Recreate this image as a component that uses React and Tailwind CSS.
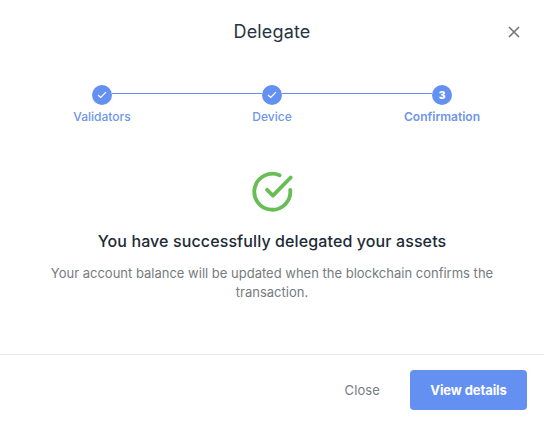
import React from "react";

const steps = [
  { label: "Validators", done: true, text: "font-medium" },
  { label: "Device", done: true, text: "font-medium" },
  { label: "Confirmation", done: false, text: "font-semibold" },
];

function Tick() {
  return (
    <svg className="mb-px" width="10" height="10" viewBox="0 0 10 10" fill="none" stroke="#fff" strokeWidth="1.3">
      <path d="M1 4.9 3.7 7.4 9 2.1" />
    </svg>
  );
}

function Stepper() {
  return (
    <div className="flex h-[41px] justify-center">
      {steps.map((step, i) => (
        <div key={step.label} className="flex w-[170px] flex-col items-center">
          <div className="flex h-5 w-full">
            <div className={i === 0 ? "mt-2 h-px flex-1" : "mt-2 h-px flex-1 bg-[#6490f1]"} />
            <div className="flex size-5 items-center justify-center rounded-full bg-[#6490f1] text-[10px] font-black text-white">
              {step.done ? <Tick /> : i + 1}
            </div>
            <div className={i === 2 ? "mt-2 h-px flex-1" : "mt-2 h-px flex-1 bg-[#6490f1]"} />
          </div>
          <span className={`mt-[3px] text-xs leading-[18px] text-[#6f95e8] ${step.text}`}>{step.label}</span>
        </div>
      ))}
    </div>
  );
}

export default function App() {
  return (
    <div className="flex h-[425px] w-[544px] flex-col overflow-hidden bg-white font-['Inter',sans-serif]">
      <header className="grid h-16 grid-cols-[60px_1fr_60px] items-center">
        <h1 className="col-start-2 text-center text-lg leading-6 tracking-[0.15px] text-[#27343f]">Delegate</h1>
        <button className="flex justify-center" aria-label="Close dialog">
          <svg width="12" height="12" viewBox="0 0 12 12" fill="none" stroke="#747474" strokeWidth="1.6">
            <path d="M1 1 11 11M11 1 1 11" />
          </svg>
        </button>
      </header>
      <main className="flex flex-1 flex-col pt-[21px]">
        <Stepper />
        <div className="flex flex-col items-center pt-[45px]">
          <svg width="42" height="42" viewBox="0 0 42 42" fill="none" stroke="#66be54" strokeWidth="3.8" strokeLinecap="round" strokeLinejoin="round">
            <path d="M28.6 4.3A18 18 0 1 0 39.2 18.8" />
            <path d="M16.1 18.8 21.9 24.6 39.7 6.5" />
          </svg>
          <h2 className="mt-4 text-base leading-6 font-medium tracking-[0.11px] text-[#1d2b36]">
            You have successfully delegated your assets
          </h2>
          <p className="mt-[11px] w-[464px] text-center text-[13px] leading-[19px] text-[#767b80]">
            Your account balance will be updated when the blockchain confirms the transaction.
          </p>
        </div>
      </main>
      <footer className="flex h-[71px] items-start justify-end border-t border-[#e9e9e9] pt-[15px] pr-[17px]">
        <button className="mr-[30px] h-10 pt-px text-[13px] tracking-[0.1px] text-[#767b80]">Close</button>
        <button className="h-10 w-[117px] rounded bg-[#6490f1] pt-px text-[13px] font-bold tracking-[-0.1px] text-white">View details</button>
      </footer>
    </div>
  );
}
